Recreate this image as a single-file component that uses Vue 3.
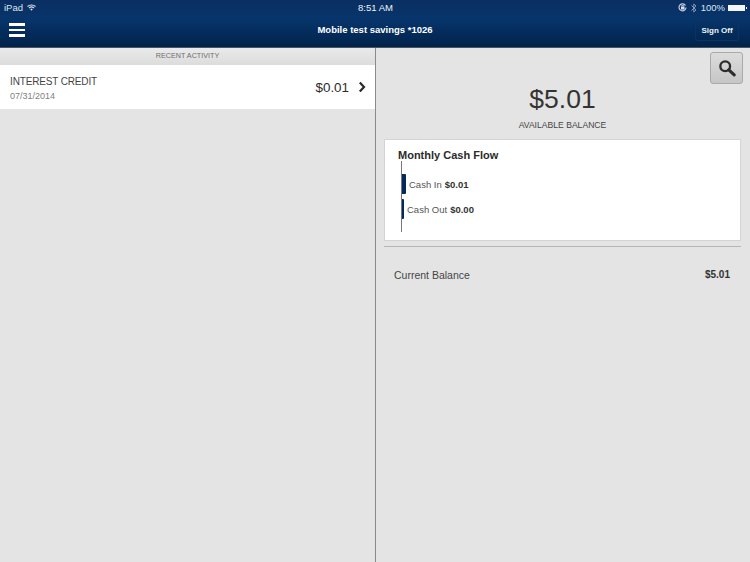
<script setup>
const bars = [
  { label: 'Cash In', value: '$0.01', width: 4, height: 20 },
  { label: 'Cash Out', value: '$0.00', width: 2, height: 20 }
]
</script>

<template>
  <div class="app">
    <header class="header">
      <div class="status">
        <div class="status-left">
          <span>iPad</span>
          <svg width="9" height="7" viewBox="0 0 18 14">
            <path d="M1 5 C5 1 13 1 17 5" fill="none" stroke="#dce4ee" stroke-width="2.2" />
            <path d="M4 8 C7 5.4 11 5.4 14 8" fill="none" stroke="#dce4ee" stroke-width="2.2" />
            <path d="M6.5 10.5 L9 8.8 L11.5 10.5 L9 13.5 Z" fill="#dce4ee" />
          </svg>
        </div>
        <div class="status-time">8:51 AM</div>
        <div class="status-right">
          <svg width="9" height="9" viewBox="0 0 18 18">
            <path d="M15 5 A7 7 0 1 0 16 9" fill="none" stroke="#c5d0de" stroke-width="2.4" />
            <rect x="6" y="7" width="7" height="6" fill="#dce4ee" />
            <path d="M7.5 7 V5 H11.5 V7" fill="none" stroke="#dce4ee" stroke-width="1.4" />
          </svg>
          <svg class="bt" width="6" height="10" viewBox="0 0 12 20">
            <path d="M1 5 L10 14 L5.5 18 V2 L10 6 L1 15" fill="none" stroke="#8ea2bb" stroke-width="1.8" />
          </svg>
          <span>100%</span>
          <div class="battery"><div class="battery-cap"></div></div>
        </div>
      </div>
      <div class="nav">
        <button class="menu" aria-label="Menu"><i></i><i></i><i></i></button>
        <div class="title">Mobile test savings *1026</div>
        <button class="signoff">Sign Off</button>
      </div>
    </header>

    <main class="main">
      <section class="left">
        <div class="section-head">RECENT ACTIVITY</div>
        <div class="row">
          <div>
            <div class="row-name">INTEREST CREDIT</div>
            <div class="row-date">07/31/2014</div>
          </div>
          <div class="row-end">
            <span class="row-amount">$0.01</span>
            <svg width="8" height="12" viewBox="0 0 8 12">
              <path d="M1.8 1.5 L6 6 L1.8 10.5" fill="none" stroke="#2a2a2a" stroke-width="2.2" />
            </svg>
          </div>
        </div>
      </section>

      <section class="right">
        <div class="search-line">
          <button class="search" aria-label="Search">
            <svg width="18" height="18" viewBox="0 0 20 20">
              <circle cx="8" cy="8" r="5.4" fill="none" stroke="#2c2c2c" stroke-width="2.6" />
              <path d="M12 12 L18 17.6" stroke="#2c2c2c" stroke-width="3.4" stroke-linecap="round" />
            </svg>
          </button>
        </div>
        <div class="balance">$5.01</div>
        <div class="balance-label">AVAILABLE BALANCE</div>
        <div class="card">
          <h2 class="card-title">Monthly Cash Flow</h2>
          <div class="chart">
            <div v-for="bar in bars" :key="bar.label" class="bar-row">
              <div class="bar" :style="{ width: bar.width + 'px', height: bar.height + 'px' }"></div>
              <span class="bar-label">{{ bar.label }}</span>
              <b class="bar-value">{{ bar.value }}</b>
            </div>
          </div>
        </div>
        <div class="current">
          <span>Current Balance</span>
          <b>$5.01</b>
        </div>
      </section>
    </main>
  </div>
</template>

<style>
html, body {
  margin: 0;
  background: #e4e4e4;
}
</style>

<style scoped>
.app {
  width: 750px;
  height: 562px;
  display: flex;
  flex-direction: column;
  overflow: hidden;
  font-family: "Liberation Sans", Arial, sans-serif;
  color: #2b2b2b;
}

.header {
  height: 48px;
  box-sizing: border-box;
  background: linear-gradient(#0a2f62, #07356c 40%, #01234a);
  border-bottom: 1px solid #4a5462;
  color: #fff;
}

.status {
  height: 15px;
  padding: 0 3px 0 4px;
  display: grid;
  grid-template-columns: 1fr auto 1fr;
  align-items: center;
  font-size: 9.5px;
  color: #dce4ee;
}
.status-left {
  display: flex;
  align-items: center;
  gap: 4px;
}
.status-time {
  color: #f0f3f7;
}
.status-right {
  display: flex;
  align-items: center;
  justify-content: flex-end;
  gap: 3px;
}
.bt {
  margin: 0 1px;
}
.battery {
  position: relative;
  width: 17px;
  height: 6px;
  margin-right: 2px;
  background: #f4f6f9;
}
.battery-cap {
  position: absolute;
  right: -2px;
  top: 2px;
  width: 1px;
  height: 2px;
  background: #f4f6f9;
}

.nav {
  height: 32px;
  padding: 0 11px 0 9px;
  display: flex;
  align-items: center;
  justify-content: space-between;
  position: relative;
}
.menu {
  width: 16px;
  padding: 0;
  border: 0;
  background: none;
  display: flex;
  flex-direction: column;
  gap: 3px;
  margin-bottom: 2px;
}
.menu i {
  display: block;
  height: 2.5px;
  background: #fff;
}
.title {
  position: absolute;
  left: 0;
  right: 0;
  top: 9px;
  text-align: center;
  font-size: 9.5px;
  font-weight: bold;
}
.signoff {
  width: 44px;
  height: 21px;
  padding: 0;
  margin-bottom: 2px;
  border: 1px solid #0d3360;
  border-radius: 3px;
  background: transparent;
  color: #f0f3f7;
  font: bold 8px "Liberation Sans", Arial, sans-serif;
}

.main {
  flex: 1;
  display: flex;
}

.left {
  width: 376px;
  box-sizing: border-box;
  border-right: 1px solid #8a8a8a;
}
.section-head {
  height: 17px;
  line-height: 16px;
  text-align: center;
  font-size: 7.2px;
  color: #6d6d6d;
  background: linear-gradient(#eaeaea, #dcdcdc);
}
.row {
  height: 44px;
  padding: 0 10px;
  display: flex;
  align-items: center;
  justify-content: space-between;
  background: #fff;
}
.row-name {
  font-size: 10px;
  letter-spacing: -0.15px;
  color: #444;
  margin-top: 2px;
  margin-bottom: 4px;
}
.row-date {
  font-size: 9px;
  color: #808080;
}
.row-end {
  display: flex;
  align-items: center;
  gap: 9px;
  margin-right: -1px;
}
.row-amount {
  font-size: 13.4px;
}

.right {
  flex: 1;
  padding: 4px 9px 0 8px;
  background: #e4e4e4;
}
.search-line {
  display: flex;
  justify-content: flex-end;
  margin-right: -2px;
}
.search {
  width: 33px;
  height: 32px;
  padding: 0;
  display: flex;
  align-items: center;
  justify-content: center;
  border: 1px solid #a9a9a9;
  border-radius: 3px;
  background: linear-gradient(#dcdcdc, #c6c6c6);
}
.balance {
  margin-top: -1px;
  text-align: center;
  font-size: 26.5px;
  line-height: 32px;
  color: #333;
}
.balance-label {
  margin-top: 5px;
  text-align: center;
  font-size: 8.6px;
  color: #444;
}
.card {
  height: 102px;
  margin-top: 9px;
  box-sizing: border-box;
  padding: 9px 13px 0;
  background: #fff;
  border: 1px solid #d4d4d4;
}
.card-title {
  margin: 0;
  font-size: 11px;
  line-height: 13px;
  color: #2b2b2b;
}
.chart {
  height: 71px;
  margin-left: 3px;
  padding-top: 13px;
  margin-top: -1px;
  box-sizing: border-box;
  border-left: 1px solid #777;
  display: flex;
  flex-direction: column;
  gap: 5px;
}
.bar-row {
  display: flex;
  align-items: center;
  font-size: 9.5px;
}
.bar {
  background: #04295c;
  border-radius: 0 1px 1px 0;
  margin-right: 3px;
}
.bar-label {
  color: #555;
  margin-right: 3px;
}
.bar-value {
  color: #333;
}
.current {
  margin-top: 5px;
  padding: 22px 11px 0 10px;
  border-top: 1px solid #b5b5b5;
  display: flex;
  justify-content: space-between;
  font-size: 10.5px;
  color: #444;
}
.current b {
  font-size: 10px;
  color: #333;
}
</style>
